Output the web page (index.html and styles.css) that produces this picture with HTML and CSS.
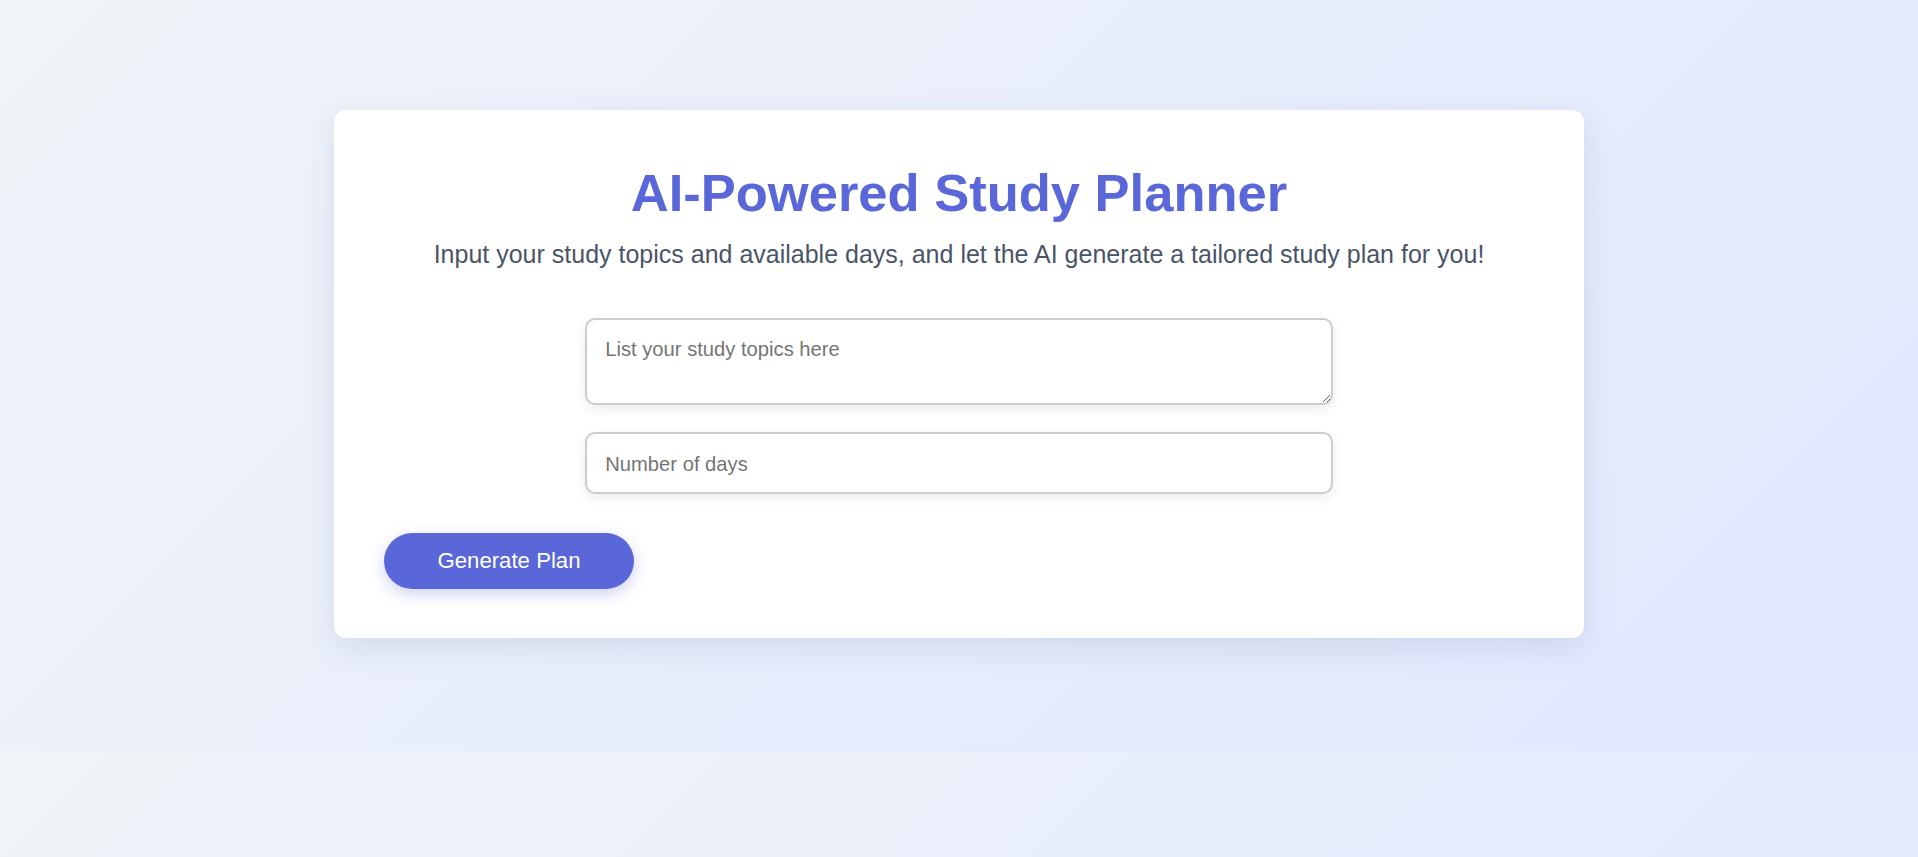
FILE: index.html
```html
<!DOCTYPE html>
<html lang="en">
<head>
<meta charset="utf-8">
<title>AI-Powered Study Planner</title>
<link rel="stylesheet" href="styles.css">
</head>
<body>
  <main class="card">
    <h1 class="title">AI-Powered Study Planner</h1>
    <p class="subtitle">Input your study topics and available days, and let the AI generate a tailored study plan for you!</p>
    <div class="fields">
      <textarea class="field field-area" placeholder="List your study topics here"></textarea>
      <input class="field" type="number" placeholder="Number of days">
    </div>
    <button class="btn" type="button">Generate Plan</button>
  </main>
</body>
</html>
```

FILE: styles.css
```css
html {
  margin: 0;
}
body {
  margin: 0;
  padding: 110px 0 113px;
  font-family: "Liberation Sans", Arial, sans-serif;
  background: linear-gradient(135deg, #f0f4f8, #e0e7ff);
}
.card {
  box-sizing: border-box;
  width: 1250px;
  margin: 0 auto;
  padding: 50px 50px 49px;
  background: #fff;
  border-radius: 12px;
  box-shadow: 0 10px 30px rgba(60, 70, 110, 0.12);
  display: flex;
  flex-direction: column;
}
.title {
  margin: 0;
  font-size: 52.5px;
  line-height: 65px;
  font-weight: 700;
  color: #5a67d8;
  text-align: center;
}
.subtitle {
  margin: 15px 0 0;
  font-size: 25px;
  color: #4a5568;
  text-align: center;
}
.fields {
  margin-top: 49px;
  display: flex;
  flex-direction: column;
  align-items: center;
  gap: 27px;
}
.field {
  box-sizing: border-box;
  width: 65%;
  height: 62px;
  padding: 18px 18px 16px;
  border: 2px solid #cccccc;
  border-radius: 10px;
  font-family: inherit;
  font-size: 20.2px;
  color: #333;
  background: #fff;
  box-shadow: 0 4px 12px rgba(0, 0, 0, 0.08);
  outline: none;
}
.field::placeholder {
  color: #757575;
}
.field-area {
  height: 87px;
  resize: vertical;
}
.btn {
  align-self: flex-start;
  margin-top: 39px;
  width: 250px;
  height: 56px;
  border: none;
  border-radius: 28px;
  background: #5a67d8;
  color: #fff;
  font-family: inherit;
  font-size: 22.2px;
  box-shadow: 0 5px 15px rgba(90, 103, 216, 0.3);
  cursor: pointer;
}
```
